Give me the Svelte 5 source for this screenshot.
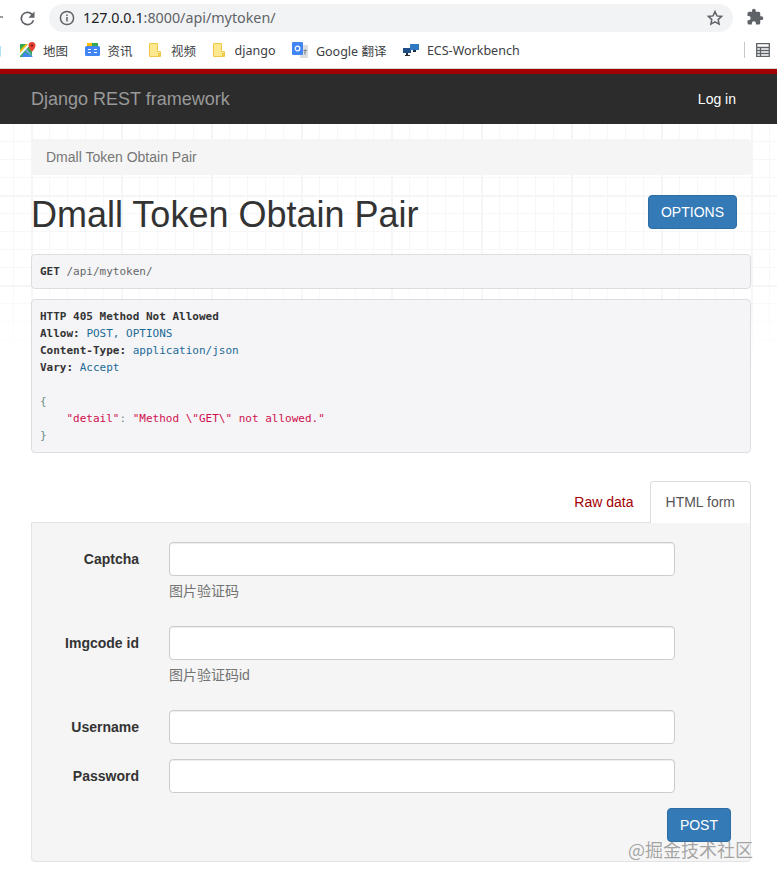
<script>
  const bookmarks = [
    { label: '地图', icon: 'maps' },
    { label: '资讯', icon: 'news' },
    { label: '视频', icon: 'folder' },
    { label: 'django', icon: 'folder' },
    { label: 'Google 翻译', icon: 'translate' },
    { label: 'ECS-Workbench', icon: 'ecs' }
  ];
  const fields = [
    { label: 'Captcha', help: '图片验证码' },
    { label: 'Imgcode id', help: '图片验证码id' },
    { label: 'Username' },
    { label: 'Password' }
  ];
</script>

<div class="chrome">
  <div class="toolbar">
    <svg class="back" width="6" height="14" viewBox="0 0 6 14"><path d="M0 7h3" stroke="#9a9da1" stroke-width="2"/></svg>
    <svg class="reload" width="21" height="21" viewBox="0 0 24 24"><path fill="#5f6368" d="M17.65 6.35A8 8 0 1 0 19.73 14h-2.08A6 6 0 1 1 12 6c1.66 0 3.14.69 4.22 1.78L13 11h7V4z"/></svg>
    <div class="omnibox">
      <svg width="16" height="16" viewBox="0 0 16 16"><circle cx="8" cy="8" r="6.6" fill="none" stroke="#5f6368" stroke-width="1.5"/><path d="M8 7v4.400M8 4.400v1.500" stroke="#5f6368" stroke-width="1.5"/></svg>
      <span class="url"><b>127.0.0.1</b>:8000/api/mytoken/</span>
      <svg class="star" width="18" height="18" viewBox="0 0 24 24"><path fill="none" stroke="#5f6368" stroke-width="2" d="M12 3.500l2.600 5.700 6.200.7-4.600 4.200 1.300 6.100-5.500-3.100-5.500 3.100 1.300-6.100-4.600-4.200 6.200-.7z"/></svg>
    </div>
    <svg class="puzzle" width="18" height="18" viewBox="0 0 24 24"><path fill="#5f6368" d="M20.500 11H19V7a2 2 0 0 0-2-2h-4V3.500a2.500 2.500 0 0 0-5 0V5H4a2 2 0 0 0-2 2v3.800h1.500a2.700 2.700 0 0 1 0 5.400H2V20a2 2 0 0 0 2 2h3.800v-1.500a2.700 2.700 0 0 1 5.400 0V22H17a2 2 0 0 0 2-2v-4h1.500a2.500 2.500 0 0 0 0-5z"/></svg>
  </div>
  <div class="bookmarks">
    <span class="stub">用</span>
    <div class="bm-list">
      {#each bookmarks as b}
        <span class="bm bm-{b.icon}">
          {#if b.icon === 'maps'}
            <svg width="16" height="16" viewBox="0 0 16 16"><path fill="#34a853" d="M0 2h12v13H0z"/><path fill="#fbbc04" d="M0 8l6-6h2L0 11z"/><path fill="#fff" d="M0 11l8-9h3L0 14z"/><path fill="#4285f4" d="M4 10l9 5H2z"/><path fill="#6fa8f5" d="M5 9l2-2 6 8z"/><path fill="#ea4335" d="M12 0a3.500 3.500 0 0 1 3.500 3.500C15.500 6 12 10 12 10S8.500 6 8.500 3.500A3.500 3.500 0 0 1 12 0z"/><circle cx="12" cy="3.500" r="1.200" fill="#8e1c14"/></svg>
          {:else if b.icon === 'news'}
            <svg width="15" height="14" viewBox="0 0 15 14"><path fill="#fbbc04" d="M2 0h6v4H2z"/><path fill="#34a853" d="M7 0h6v4H7z"/><rect y="3" width="15" height="10" rx="1.500" fill="#4285f4"/><path stroke="#fff" stroke-width="1.200" d="M3 6.500h3M3 9.500h3M9 6.500h3M9 9.500h3"/></svg>
          {:else if b.icon === 'folder'}
            <svg width="12" height="14" viewBox="0 0 12 14"><path fill="#fde78f" stroke="#f0c84a" d="M.5.500h8v8h3v5H.5z"/><path fill="#f0c84a" d="M9 10h2.500v3.500H9z"/></svg>
          {:else if b.icon === 'translate'}
            <svg width="16" height="16" viewBox="0 0 16 16"><path fill="#dbdde0" d="M7 3h9v13H8z"/><rect width="11" height="13" rx="1" fill="#4285f4"/><circle cx="5.500" cy="6.500" r="2.300" fill="none" stroke="#fff" stroke-width="1.200"/><path stroke="#80868b" stroke-width="1.200" d="M11.500 8.500h3.500M13 7.500v5"/></svg>
          {:else}
            <svg width="16" height="12" viewBox="0 0 16 12"><path fill="#1f4f86" d="M0 4h8v5H0z"/><path fill="#2b2f36" d="M3 9h2v2h2v1H2v-1h1z"/><path fill="#2f78c2" d="M7 0h9v6H7z"/><path fill="#1b2b40" d="M10 6h3v2h-3z"/></svg>
          {/if}
          <span>{b.label}</span>
        </span>
      {/each}
    </div>
    <span class="spacer"></span>
    <span class="divider"></span>
    <svg class="reading" width="14" height="14" viewBox="0 0 14 14"><path fill="none" stroke="#5f6368" stroke-width="1.300" d="M.7.700h12.600v12.600H.7zM.7 4.500h12.600M.7 7.500h12.600M.7 10.500h12.600M4.500 4.500v8.800"/></svg>
  </div>
</div>

<div class="page">
  <header class="navbar">
    <a class="brand" href="#top">Django REST framework</a>
    <a class="login" href="#top">Log in</a>
  </header>

  <main class="container">
    <div class="breadcrumb">Dmall Token Obtain Pair</div>
    <div class="head">
      <h1>Dmall Token Obtain Pair</h1>
      <button class="btn options">OPTIONS</button>
    </div>
    <pre class="request"><b>GET</b> <span class="path">/api/mytoken/</span></pre>
    <pre class="response"><b>HTTP 405 Method Not Allowed</b>
<b>Allow:</b> <span class="val">POST, OPTIONS</span>
<b>Content-Type:</b> <span class="val">application/json</span>
<b>Vary:</b> <span class="val">Accept</span>

<span class="pun">{'{'}</span>
    <span class="str">"detail"</span><span class="pun">:</span> <span class="str">"Method \"GET\" not allowed."</span>
<span class="pun">{'}'}</span></pre>

    <div class="tabs">
      <span class="tab">Raw data</span>
      <span class="tab active">HTML form</span>
    </div>
    <form class="panel">
      {#each fields as f}
        <div class="row">
          <label for={f.label}>{f.label}</label>
          <div class="control">
            <input id={f.label} type="text" />
            {#if f.help}<span class="help">{f.help}</span>{/if}
          </div>
        </div>
      {/each}
      <div class="actions"><button type="button" class="btn">POST</button></div>
    </form>
  </main>
</div>
<div class="watermark">@掘金技术社区</div>

<style>
  :global(body) {
    margin: 0;
    background: #fff;
    font-family: "Liberation Sans", Arial, sans-serif;
    font-size: 14px;
    color: #333;
    overflow: hidden;
  }
  .chrome { height: 69px; box-sizing: border-box; background: #fff; border-bottom: 1px solid #d6d7d9; font-family: "Open Sans", "Noto Sans CJK SC", sans-serif; }
  .toolbar { height: 34px; display: flex; align-items: center; }
  .back { margin-right: 11px; flex: none; }
  .reload { margin: 2px 11px 0 0; flex: none; }
  .omnibox { width: 684px; box-sizing: border-box; height: 28px; margin-top: 1px; border-radius: 14px; background: #f1f3f4; display: flex; align-items: center; padding: 0 9px 0 10px; flex: none; }
  .url { margin-left: 8px; font-family: "Noto Sans", sans-serif; font-size: 14.3px; color: #5f6368; flex: 1; }
  .url b { font-weight: 400; color: #202124; }
  .puzzle { margin-left: 13px; flex: none; }
  .bookmarks { height: 34px; box-sizing: border-box; padding-bottom: 2px; display: flex; align-items: center; font-size: 12.5px; color: #3c4043; }
  .stub { width: 31px; margin-left: -11px; flex: none; }
  .bm-list { display: flex; align-items: center; gap: 16.5px; flex: none; }
  .bm { display: flex; align-items: center; gap: 8px; flex: none; font-family: "Noto Sans", "Noto Sans CJK SC", sans-serif; }
  .bm svg { flex: none; }
  .bm-maps { gap: 7px; }
  .bm-folder { gap: 10px; }
  .spacer { flex: 1; }
  .divider { width: 1px; height: 16px; background: #c4c6c8; }
  .reading { margin: 0 7px 0 11px; flex: none; }

  .page {
    border-top: 5px solid #a30000;
    background-color: #fff;
    background-image:
      linear-gradient(to bottom, rgba(255,255,255,0) 0, rgba(255,255,255,0) 200px, #fff 300px),
      linear-gradient(to right, #f5f5f5 2px, transparent 2px),
      linear-gradient(to bottom, #f5f5f5 2px, transparent 2px),
      linear-gradient(to right, #f7f7f7 1px, transparent 1px),
      linear-gradient(to bottom, #f7f7f7 1px, transparent 1px);
    background-size: 100% 100%, 90px 90px, 90px 90px, 18px 18px, 18px 18px;
    background-position: 0 0, 31px 0, 0 31px, 13px 0, 0 13px;
  }
  .navbar { height: 50px; background: #2c2c2c; display: flex; align-items: center; justify-content: space-between; padding: 0 41px 0 31px; }
  .brand { font-size: 18px; color: #999; text-decoration: none; }
  .login { color: #fff; text-decoration: none; }
  .container { padding: 15px 26px 20px 31px; }
  .breadcrumb { background: #f5f5f5; height: 36px; line-height: 36px; padding-left: 15px; color: #777; border-radius: 4px; }
  .head { display: flex; justify-content: space-between; align-items: flex-start; margin-top: 20px; height: 59px; padding-right: 14px; }
  h1 { margin: 0; font-size: 36px; font-weight: 500; line-height: 40px; color: #333; }
  .btn { background: #337ab7; border: 1px solid #2e6da4; color: #fff; font: 14px "Liberation Sans", Arial, sans-serif; padding: 6px 12px; height: 34px; border-radius: 4px; }
  .options { margin: 0; }
  pre { margin: 0; background: #f5f5f8; border: 1px solid #dcdde0; border-radius: 4px; font-family: "DejaVu Sans Mono", monospace; font-size: 11px; line-height: 17px; color: #333; padding: 8px; white-space: pre; }
  pre b { font-weight: 700; }
  .request { height: 35px; box-sizing: border-box; margin-bottom: 10px; }
  .path { color: #666; }
  .response { height: 154px; box-sizing: border-box; }
  .val { color: #1c6a96; }
  .str { color: #d0104e; }
  .pun { color: #6b8e86; }
  .tabs { display: flex; justify-content: flex-end; align-items: flex-end; margin-top: 28px; height: 42px; position: relative; z-index: 1; margin-bottom: -1px; }
  .tab { padding: 0 16px 0 0; color: #a30000; line-height: 42px; }
  .tab.active { color: #555; background: #fff; border: 1px solid #ddd; border-bottom: 0; border-radius: 4px 4px 0 0; padding: 0 15px; height: 42px; box-sizing: border-box; line-height: 41px; }
  .panel { background: #f5f5f5; border: 1px solid #e3e3e3; border-radius: 0 0 4px 4px; padding: 19px 75px 19px 0; height: 340px; box-sizing: border-box; }
  .row { display: flex; margin-bottom: 15px; }
  label { width: 107px; text-align: right; font-weight: 700; padding-top: 9px; margin-right: 30px; flex: none; color: #333; }
  .control { flex: 1; display: flex; flex-direction: column; }
  input { box-sizing: border-box; height: 34px; width: 100%; border: 1px solid #ccc; border-radius: 4px; background: #fff; box-shadow: inset 0 1px 1px rgba(0,0,0,.075); }
  .help { color: #737373; margin-top: 5px; margin-bottom: 10px; font-family: "Liberation Sans", "Noto Sans CJK SC", sans-serif; line-height: 20px; height: 20px; }
  .actions { display: flex; justify-content: flex-end; margin-right: -56px; }
  .watermark { position: absolute; left: 628px; top: 836px; font: 18px "Noto Sans CJK SC", sans-serif; color: rgba(110,110,110,.6); white-space: nowrap; }
</style>
